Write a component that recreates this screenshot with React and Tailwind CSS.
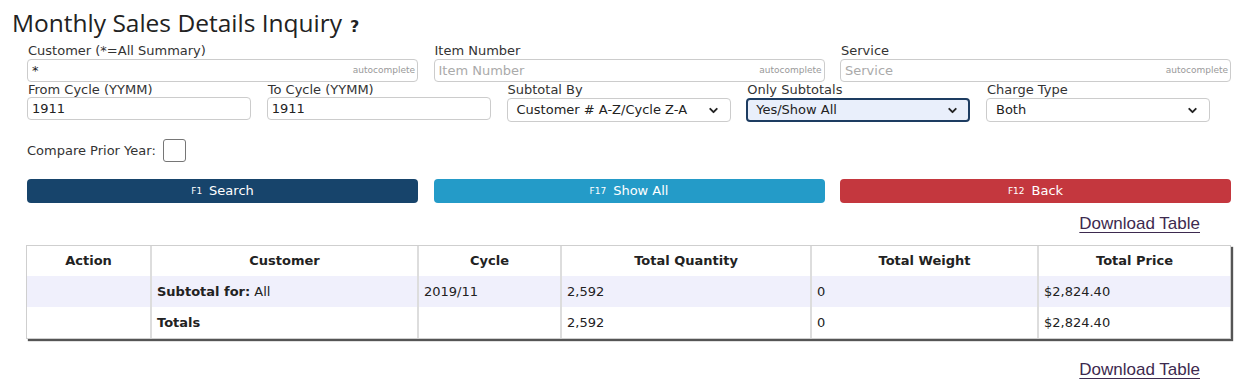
import { ChevronDown } from 'lucide-react'

const VERDANA = { fontFamily: '"DejaVu Sans", Verdana, sans-serif' }

function AutoInput({ label, value, placeholder }) {
  return (
    <div className="w-[391px] shrink-0">
      <div className="text-[13px] leading-[16px] text-[#333] pl-[1px] h-[16px]">{label}</div>
      <div className="relative h-[23px] rounded-[4px] border border-[#ccc] bg-white flex items-center px-[4px]">
        {value ? (
          <span className="text-[13px] text-[#222]">{value}</span>
        ) : (
          <span className="text-[13px] text-[#aaa]">{placeholder}</span>
        )}
        <span className="absolute right-[2px] top-[4px] text-[9px] text-[#999]">autocomplete</span>
      </div>
    </div>
  )
}

function TextInput({ label, value }) {
  return (
    <div className="w-[224px] shrink-0">
      <div className="text-[13px] leading-[16px] text-[#333] pl-[1px] h-[15px]">{label}</div>
      <div className="h-[23px] rounded-[4px] border border-[#ccc] bg-white flex items-center px-[4px] text-[13px] text-[#222]">
        {value}
      </div>
    </div>
  )
}

function SelectBox({ label, value, focused }) {
  return (
    <div className="w-[224px] shrink-0">
      <div className="text-[13px] leading-[16px] text-[#333] pl-[1px] h-[15px]">{label}</div>
      <div
        className={`mt-[1px] h-[24px] rounded-[4px] flex items-center justify-between text-[13px] text-[#222] ${
          focused ? 'border-2 border-[#1d3c61] bg-[#e9effb] pl-[8px] pr-[9px]' : 'border border-[#ccc] bg-white pl-[9px] pr-[10px]'
        }`}
      >
        <span>{value}</span>
        <ChevronDown className="h-[13px] w-[13px] text-[#222]" strokeWidth={3.5} />
      </div>
    </div>
  )
}

function ActionButton({ fkey, label, color }) {
  return (
    <div className={`w-[391px] h-[24px] rounded-[4px] flex items-center justify-center text-white ${color}`}>
      <span className="text-[9px] mr-[7px] mt-[2px]">{fkey}</span>
      <span className="text-[13px]">{label}</span>
    </div>
  )
}

function DownloadLink() {
  return (
    <div className="flex justify-end pr-[50px]">
      <a
        href="#"
        className="text-[17px] leading-[20px] text-[#3d2a4f] underline underline-offset-[3px] decoration-[1px]"
        style={{ fontFamily: '"Liberation Sans Narrow", "Arial Narrow", "Liberation Sans", sans-serif' }}
      >
        Download Table
      </a>
    </div>
  )
}

const COLS = [
  ['Action', 'w-[123px]'],
  ['Customer', 'w-[267px]'],
  ['Cycle', 'w-[143px]'],
  ['Total Quantity', 'w-[250px]'],
  ['Total Weight', 'w-[227px]'],
  ['Total Price', 'flex-1'],
]

export default function App() {
  return (
    <div className="w-[1250px] h-[387px] bg-white overflow-hidden" style={VERDANA}>
      <div className="pl-[12px] pt-[7px] flex items-baseline">
        <h1
          className="text-[24.5px] leading-[32px] text-[#222]"
          style={{ fontFamily: '"Open Sans", "Segoe UI", sans-serif' }}
        >
          Monthly Sales Details Inquiry
        </h1>
        <span className="ml-[8px] text-[16px] font-bold text-[#222]">?</span>
      </div>

      <div className="pl-[27px]">
        <div className="mt-[4px] flex gap-[15.5px]">
          <AutoInput label="Customer (*=All Summary)" value="*" />
          <AutoInput label="Item Number" placeholder="Item Number" />
          <AutoInput label="Service" placeholder="Service" />
        </div>

        <div className="flex gap-[15.75px]">
          <TextInput label="From Cycle (YYMM)" value="1911" />
          <TextInput label="To Cycle (YYMM)" value="1911" />
          <SelectBox label="Subtotal By" value="Customer # A-Z/Cycle Z-A" />
          <SelectBox label="Only Subtotals" value="Yes/Show All" focused />
          <SelectBox label="Charge Type" value="Both" />
        </div>

        <div className="mt-[17px] flex items-center">
          <span className="text-[13px] text-[#333]">Compare Prior Year:</span>
          <span className="ml-[7px] w-[23px] h-[23px] rounded-[3px] border border-[#767676] bg-white" />
        </div>

        <div className="mt-[17px] flex gap-[15.5px]">
          <ActionButton fkey="F1" label="Search" color="bg-[#17446b]" />
          <ActionButton fkey="F17" label="Show All" color="bg-[#249bc8]" />
          <ActionButton fkey="F12" label="Back" color="bg-[#c4373e]" />
        </div>
      </div>

      <div className="mt-[11px]">
        <DownloadLink />
      </div>

      <div className="mt-[11px] ml-[26px] w-[1205px] border border-[#cfcfcf] shadow-[2px_2px_1px_#555] text-[13px] text-[#222]">
        <div className="flex h-[30px]">
          {COLS.map(([name, w], i) => (
            <div
              key={name}
              className={`${w} shrink-0 flex items-center justify-center font-bold ${i > 0 ? 'border-l-2 border-[#ddd]' : ''}`}
            >
              {name}
            </div>
          ))}
        </div>
        {[
          { bg: 'bg-[#f0f0fc]', cust: <><b>Subtotal for:</b>&nbsp;All</>, cycle: '2019/11' },
          { bg: 'bg-white', cust: <b>Totals</b>, cycle: '' },
        ].map((row, r) => (
          <div key={r} className={`flex h-[31px] ${row.bg}`}>
            {['', row.cust, row.cycle, '2,592', '0', '$2,824.40'].map((val, i) => (
              <div
                key={i}
                className={`${COLS[i][1]} shrink-0 flex items-center pl-[5px] ${i > 0 ? 'border-l-2 border-[#ddd]' : ''}`}
              >
                {val}
              </div>
            ))}
          </div>
        ))}
      </div>

      <div className="mt-[21px]">
        <DownloadLink />
      </div>
    </div>
  )
}
